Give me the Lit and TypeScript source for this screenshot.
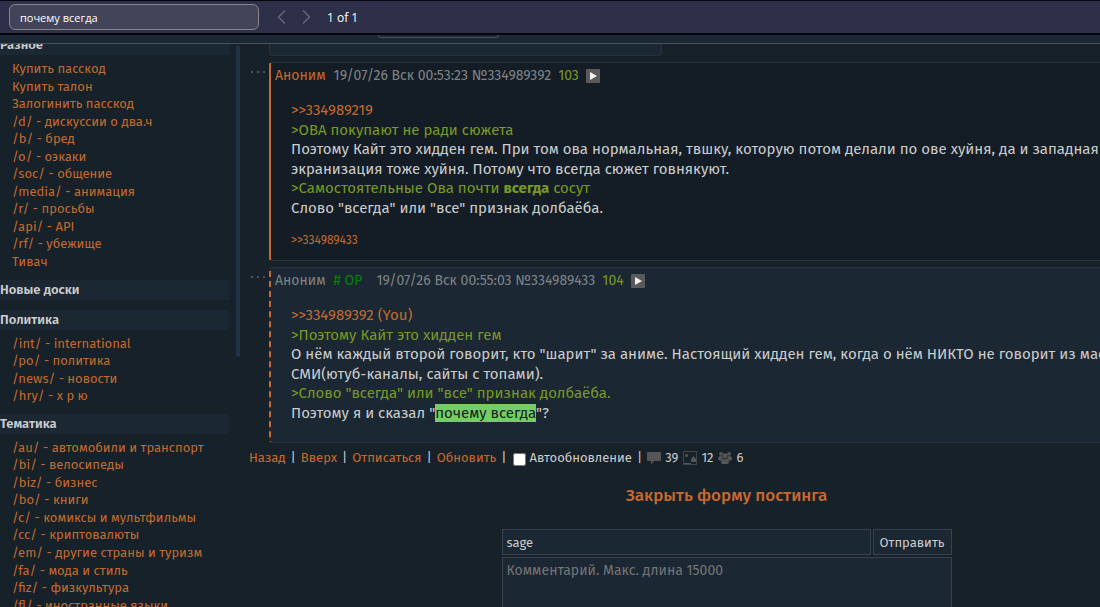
import { LitElement, html, css, svg, nothing } from "lit";
import type { TemplateResult } from "lit";
import { customElement, property } from "lit/decorators.js";

interface Group {
  title: string;
  links: string[];
}

const groups: Group[] = [
  {
    title: "Разное",
    links: [
      "Купить пасскод", "Купить талон", "Залогинить пасскод", "/d/ - дискуссии о два.ч",
      "/b/ - бред", "/o/ - оэкаки", "/soc/ - общение", "/media/ - анимация",
      "/r/ - просьбы", "/api/ - API", "/rf/ - убежище", "Тивач",
    ],
  },
  { title: "Новые доски", links: [] },
  {
    title: "Политика",
    links: ["/int/ - international", "/po/ - политика", "/news/ - новости", "/hry/ - х р ю"],
  },
  {
    title: "Тематика",
    links: [
      "/au/ - автомобили и транспорт", "/bi/ - велосипеды", "/biz/ - бизнес", "/bo/ - книги",
      "/c/ - комиксы и мультфильмы", "/cc/ - криптовалюты", "/em/ - другие страны и туризм",
      "/fa/ - мода и стиль", "/fiz/ - физкультура", "/fl/ - иностранные языки",
    ],
  },
];

@customElement("find-bar")
class FindBar extends LitElement {
  static styles = css`
    :host {
      display: flex;
      align-items: center;
      flex: none;
      box-sizing: border-box;
      height: 35px;
      padding: 0 9px;
      border-top: 1px solid #04060f;
      border-bottom: 2px solid #04060f;
      background: #2e3049;
      font-family: "Open Sans", "Noto Sans", sans-serif;
    }
    .query {
      box-sizing: border-box;
      width: 250px;
      height: 26px;
      padding: 0 10px;
      border: 1px solid #87858c;
      border-radius: 6px;
      background: #434459;
      color: #fff;
      font: inherit;
      font-size: 11px;
      outline: none;
    }
    .step {
      display: flex;
      padding: 0;
      border: 0;
      background: none;
    }
    .step svg {
      width: 26px;
      height: 16px;
      fill: none;
      stroke: #6c6d83;
      stroke-width: 1.2;
    }
    .steps {
      display: flex;
      margin-left: 9px;
    }
    .count {
      margin-left: 7px;
      color: #fff;
      font-size: 12px;
    }
  `;
  render() {
    return html`
      <input class="query" type="text" aria-label="Find in page" .value=${"почему всегда"} />
      <div class="steps">
        <button class="step" aria-label="Previous">
          <svg viewBox="0 0 26 16"><path d="M17 1.5 10.5 8 17 14.5" /></svg>
        </button>
        <button class="step" aria-label="Next">
          <svg viewBox="0 0 26 16"><path d="M9 1.5 15.500 8 9 14.5" /></svg>
        </button>
      </div>
      <span class="count">1 of 1</span>
    `;
  }
}

@customElement("board-menu")
class BoardMenu extends LitElement {
  static styles = css`
    :host {
      display: flex;
      flex: none;
      width: 240px;
      justify-content: space-between;
      font-size: 13px;
    }
    .groups {
      width: 229px;
    }
    .title {
      margin: 0;
      background: #1b2733;
      color: #ccc;
      font-size: 13px;
      font-weight: 600;
      line-height: 20px;
    }
    .list {
      margin: 0 0 9px;
      padding: 5px 0 0 12px;
      list-style: none;
      line-height: 1.35;
      white-space: nowrap;
    }
    .list.empty {
      margin-bottom: 10px;
      padding: 0;
    }
    .link {
      color: #c36b2d;
      text-decoration: none;
    }
    .thumb {
      width: 4px;
      height: 312px;
      margin-top: 10px;
      border-radius: 2px;
      background: #203246;
    }
  `;
  render() {
    return html`
      <nav class="groups">
        ${groups.map(
          (g) => html`
            <h3 class="title">${g.title}</h3>
            <ul class="list ${g.links.length ? "" : "empty"}">
              ${g.links.map((l) => html`<li><a class="link" href="#">${l}</a></li>`)}
            </ul>
          `,
        )}
      </nav>
      <div class="thumb"></div>
    `;
  }
}

@customElement("thread-post")
class ThreadPost extends LitElement {
  @property() date = "";
  @property() number = "";
  @property() index = "";
  @property() kind = "own";
  @property({ type: Boolean }) op = false;
  @property({ attribute: false }) body: TemplateResult | typeof nothing = nothing;
  @property() reply = "";

  static styles = css`
    :host {
      display: flex;
      margin-top: 6px;
    }
    .more {
      display: flex;
      flex: none;
      width: 20px;
      height: 20px;
      padding: 0;
      border: 0;
      background: none;
    }
    .more svg {
      width: 20px;
      height: 20px;
      fill: #4d5357;
    }
    .post {
      flex: 1;
      min-width: 0;
      border: 1px solid #25323d;
      border-left: 2px solid #c8692f;
      border-radius: 3px;
      background: #141d26;
    }
    .post.reply {
      border-left-style: dashed;
      background: #1b2733;
    }
    .head {
      display: flex;
      align-items: center;
      height: 18px;
      padding: 4px 4px 0;
      color: #7f8386;
      font-size: 14px;
      line-height: 18px;
      white-space: nowrap;
    }
    .name {
      margin-right: 8px;
    }
    .own .name {
      color: #c36b2d;
    }
    .op {
      margin-right: 14px;
      color: #088008;
    }
    .index {
      margin: 0 7px;
      color: #789922;
    }
    .play {
      display: flex;
      padding: 0;
      border: 0;
      background: none;
    }
    .play svg {
      width: 14px;
      height: 14px;
    }
    .text {
      margin: 16px 40px 0 20px;
      font-size: 15px;
      line-height: 1.3;
    }
    .reply .text {
      margin-bottom: 19px;
    }
    .refs {
      margin: 14px 20px 12px;
      font-size: 12px;
      line-height: 16px;
    }
    a {
      color: #c36b2d;
      text-decoration: none;
    }
    .quote {
      color: #789922;
    }
    mark {
      background: #76cc66;
      color: #14202a;
    }
  `;
  render() {
    return html`
      <button class="more" aria-label="Меню поста">
        <svg viewBox="0 0 20 20"><path d="M2 9h2v2h-2zM8 9h2v2h-2zM14 9h2v2h-2z" /></svg>
      </button>
      <article class="post ${this.kind}">
        <header class="head">
          <span class="name">Аноним</span>
          ${this.op ? html`<span class="op"># OP</span>` : nothing}
          <span>${this.date} №${this.number}</span>
          <span class="index">${this.index}</span>
          <button class="play" aria-label="Ответить">
            <svg viewBox="0 0 14 14">
              <rect width="14" height="14" rx="1" fill="#5a5a5a" />
              <path d="M4 3v8l7-4z" fill="#f2f2f2" />
            </svg>
          </button>
        </header>
        <div class="text">${this.body}</div>
        ${this.reply ? html`<div class="refs"><a href="#">&gt;&gt;${this.reply}</a></div>` : nothing}
      </article>
    `;
  }
}

const commentIcon = svg`<path d="M1 1h12q1 0 1 1v7q0 1-1 1H7l-3 3.500V10H1q-1 0-1-1V2q0-1 1-1z"/>`;
const pictureIcon = svg`<path fill-rule="evenodd" d="M0 0h14v14H0zM1 1v12h12V1z" opacity=".7"/><circle cx="3.500" cy="4.500" r="1.500"/><path d="M8 11V8l2.500-3L13 8v3zM1 12h7v1H1z"/>`;
const usersIcon = svg`<circle cx="3" cy="2.800" r="1.900"/><circle cx="11" cy="2.800" r="1.900"/><circle cx="7" cy="4.800" r="2.600"/><path d="M0 8q0-3 3-3 .8 0 1.200.4Q4 7 5 8 3.300 8.300 3 9.500H1Q0 9.500 0 8zM14 8q0-3-3-3-.8 0-1.200.4Q10 7 9 8q1.700.3 2 1.500h2q1 0 1-1.500zM3 11.200Q3 8 5.500 8q1.500.8 3 0Q11 8 11 11.200q0 1.800-2 1.800H5q-2 0-2-1.800z"/>`;

@customElement("thread-footer")
class ThreadFooter extends LitElement {
  static styles = css`
    :host {
      display: block;
      margin-top: 5px;
    }
    a {
      color: #c8692f;
      text-decoration: none;
    }
    .bar {
      display: flex;
      align-items: center;
      gap: 5px;
      font-size: 13px;
      line-height: 20px;
      white-space: nowrap;
    }
    .auto,
    .stat {
      display: flex;
      align-items: center;
      gap: 4px;
    }
    .check {
      width: 13px;
      height: 13px;
      margin: 2px 0 0 1px;
    }
    .stat svg {
      width: 14px;
      height: 14px;
      fill: #565656;
    }
    .title {
      margin: 16px 0 21px;
      font-size: 17px;
      line-height: 24px;
      font-weight: 500;
      text-align: center;
    }
    .form {
      display: grid;
      grid-template-columns: 1fr auto;
      gap: 2px;
      width: 450px;
      margin: 0 auto;
    }
    .field {
      box-sizing: border-box;
      height: 26px;
      min-width: 0;
      margin: 0;
      padding: 0 4px;
      border: 1px solid #36424c;
      border-radius: 0;
      background: #1b2733;
      color: #ccc;
      font: inherit;
      font-size: 13px;
      outline: none;
    }
    .send {
      padding: 0 6px;
    }
    .comment {
      grid-column: 1 / -1;
      height: 160px;
      padding: 4px;
      font-size: 14px;
      resize: none;
    }
    .field::placeholder {
      color: #757575;
    }
  `;
  render() {
    return html`
      <div class="bar">
        <a href="#">Назад</a><span>|</span><a href="#">Вверх</a><span>|</span
        ><a href="#">Отписаться</a><span>|</span><a href="#">Обновить</a><span>|</span>
        <label class="auto"><input class="check" type="checkbox" />Автообновление</label>
        <span>|</span>
        <span class="stat"><svg viewBox="0 0 14 14">${commentIcon}</svg>39</span>
        <span class="stat"><svg viewBox="0 0 14 14">${pictureIcon}</svg>12</span>
        <span class="stat"><svg viewBox="0 0 14 14">${usersIcon}</svg>6</span>
      </div>
      <h2 class="title"><a href="#">Закрыть форму постинга</a></h2>
      <form class="form">
        <input class="field" type="text" aria-label="Email" .value=${"sage"} />
        <button class="field send" type="button">Отправить</button>
        <textarea class="field comment" aria-label="Комментарий" placeholder="Комментарий. Макс. длина 15000"></textarea>
      </form>
    `;
  }
}

@customElement("app-root")
class AppRoot extends LitElement {
  static styles = css`
    :host {
      display: flex;
      flex-direction: column;
      height: 100vh;
      overflow: hidden;
      background: #17212a;
      color: #ccc;
      font-family: "Trebuchet MS", "Fira Sans", Lato, sans-serif;
    }
    .top {
      position: relative;
      z-index: 1;
      flex: none;
      display: flex;
      align-items: flex-start;
      box-sizing: border-box;
      height: 9px;
      margin-bottom: -9px;
      padding-left: 378px;
      border-bottom: 1px solid #46525b;
      background: #1b2733;
    }
    .board {
      box-sizing: border-box;
      width: 121px;
      height: 3px;
      border: 1px solid #46525b;
      border-top: 0;
      border-radius: 0 0 4px 4px;
    }
    .page {
      display: flex;
      flex: 1;
      min-height: 0;
      gap: 9px;
      overflow: hidden;
    }
    .thread {
      flex: none;
      width: calc(100% - 145px);
    }
    .previous {
      box-sizing: border-box;
      width: 393px;
      height: 21px;
      margin-left: 20px;
      border: 1px solid #25323d;
      border-radius: 3px;
      background: #1b2733;
    }
  `;

  private first = html`
    <a href="#">&gt;&gt;334989219</a><br />
    <span class="quote">&gt;ОВА покупают не ради сюжета</span><br />
    Поэтому Кайт это хидден гем. При том ова нормальная, твшку, которую потом делали по ове хуйня, да и западная
    экранизация тоже хуйня. Потому что всегда сюжет говнякуют.<br />
    <span class="quote">&gt;Самостоятельные Ова почти <strong>всегда</strong> сосут</span><br />
    Слово "всегда" или "все" признак долбаёба.
  `;

  private second = html`
    <a href="#">&gt;&gt;334989392 (You)</a><br />
    <span class="quote">&gt;Поэтому Кайт это хидден гем</span><br />
    О нём каждый второй говорит, кто "шарит" за аниме. Настоящий хидден гем, когда о нём НИКТО не говорит из массовых
    СМИ(ютуб-каналы, сайты с топами).<br />
    <span class="quote">&gt;Слово "всегда" или "все" признак долбаёба.</span><br />
    Поэтому я и сказал "<mark>почему всегда</mark>"?
  `;

  render() {
    return html`
      <find-bar></find-bar>
      <div class="top"><div class="board"></div></div>
      <div class="page">
        <board-menu></board-menu>
        <main class="thread">
          <div class="previous"></div>
          <thread-post
            date="19/07/26 Вск 00:53:23"
            number="334989392"
            index="103"
            kind="own"
            reply="334989433"
            .body=${this.first}
          ></thread-post>
          <thread-post
            date="19/07/26 Вск 00:55:03"
            number="334989433"
            index="104"
            kind="reply"
            op
            .body=${this.second}
          ></thread-post>
          <thread-footer></thread-footer>
        </main>
      </div>
    `;
  }
}
